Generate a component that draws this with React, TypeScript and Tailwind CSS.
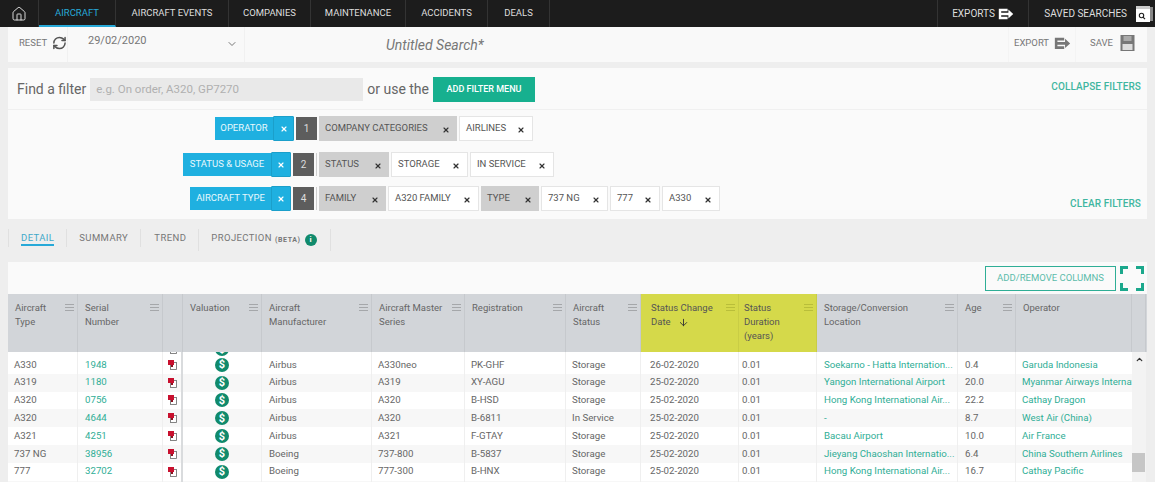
import React from 'react';
import { House, RefreshCw, ChevronDown, ChevronUp, ArrowDown, X } from 'lucide-react';

const nav = [
  { t: 'AIRCRAFT', w: 'w-[77px]', active: true },
  { t: 'AIRCRAFT EVENTS', w: 'w-[113px]' },
  { t: 'COMPANIES', w: 'w-[82px]' },
  { t: 'MAINTENANCE', w: 'w-[95px]' },
  { t: 'ACCIDENTS', w: 'w-[82px]' },
  { t: 'DEALS', w: 'w-[62px]' },
];

const filterRows = [
  {
    label: 'OPERATOR', lw: 'w-[58px]', n: '1', cls: 'mt-[6px]',
    tokens: [
      { t: 'COMPANY CATEGORIES', g: true, w: 'w-[138px]' },
      { t: 'AIRLINES', w: 'w-[74px]' },
    ],
  },
  {
    label: 'STATUS & USAGE', lw: 'w-[88px]', n: '2', cls: 'mt-[11px]',
    tokens: [
      { t: 'STATUS', g: true, w: 'w-[70px]' },
      { t: 'STORAGE', w: 'w-[77px]' },
      { t: 'IN SERVICE', w: 'w-[84px]' },
    ],
  },
  {
    label: 'AIRCRAFT TYPE', lw: 'w-[81px]', n: '4', cls: 'mt-[9px]',
    tokens: [
      { t: 'FAMILY', g: true, w: 'w-[67px]' },
      { t: 'A320 FAMILY', w: 'w-[91px]' },
      { t: 'TYPE', g: true, w: 'w-[58px]' },
      { t: '737 NG', w: 'w-[67px]' },
      { t: '777', w: 'w-[50px]' },
      { t: 'A330', w: 'w-[58px]' },
    ],
  },
];

const cols = [
  { h: ['Aircraft', 'Type'], w: 'w-[70px]' },
  { h: ['Serial', 'Number'], w: 'w-[85px]' },
  { h: [], w: 'w-[20px]', noMenu: true },
  { h: ['Valuation'], w: 'w-[79px]' },
  { h: ['Aircraft', 'Manufacturer'], w: 'w-[110px]' },
  { h: ['Aircraft Master', 'Series'], w: 'w-[93px]' },
  { h: ['Registration'], w: 'w-[101px]' },
  { h: ['Aircraft', 'Status'], w: 'w-[75px]' },
  { h: ['Status Change', 'Date'], w: 'w-[98px]', hi: true, sort: true, pad: 'pl-[10px]' },
  { h: ['Status', 'Duration', '(years)'], w: 'w-[78px]', hi: true, pad: 'pl-[5px]' },
  { h: ['Storage/Conversion', 'Location'], w: 'w-[141px]' },
  { h: ['Age'], w: 'w-[58px]' },
  { h: ['Operator'], w: 'w-[116px]', noMenu: true },
  { h: [], w: 'w-[14px]', noMenu: true },
];

const rows = [
  ['A330', '1948', 'Airbus', 'A330neo', 'PK-GHF', 'Storage', '26-02-2020', '0.01', 'Soekarno - Hatta Internation...', '0.4', 'Garuda Indonesia'],
  ['A319', '1180', 'Airbus', 'A319', 'XY-AGU', 'Storage', '25-02-2020', '0.01', 'Yangon International Airport', '20.0', 'Myanmar Airways International'],
  ['A320', '0756', 'Airbus', 'A320', 'B-HSD', 'Storage', '25-02-2020', '0.01', 'Hong Kong International Air...', '22.2', 'Cathay Dragon'],
  ['A320', '4644', 'Airbus', 'A320', 'B-6811', 'In Service', '25-02-2020', '0.01', '-', '8.7', 'West Air (China)'],
  ['A321', '4251', 'Airbus', 'A321', 'F-GTAY', 'Storage', '25-02-2020', '0.01', 'Bacau Airport', '10.0', 'Air France'],
  ['737 NG', '38956', 'Boeing', '737-800', 'B-5837', 'Storage', '25-02-2020', '0.01', 'Jieyang Chaoshan Internatio...', '6.4', 'China Southern Airlines'],
  ['777', '32702', 'Boeing', '777-300', 'B-HNX', 'Storage', '25-02-2020', '0.01', 'Hong Kong International Air...', '16.7', 'Cathay Pacific'],
];
const blank = ['', '', '', '', '', '', '', '', '', '', ''];

function ExportIcon({ color, size }: { color: string; size: number }) {
  return (
    <svg width={size} height={size * 0.75} viewBox="0 0 20 15" fill="none">
      <path d="M1 1h11v3H4v7h8v3H1z" fill={color} />
      <path d="M3 6h10V2l6 5.5-6 5.5V9H3z" fill={color} />
    </svg>
  );
}

function SaveIcon() {
  return (
    <svg width="15" height="16" viewBox="0 0 14 16">
      <rect width="14" height="16" fill="#777" />
      <rect x="3" y="1" width="8" height="5" fill="#aaa" />
      <rect x="2" y="9" width="10" height="6" fill="#ddd" />
    </svg>
  );
}

function SavedIcon() {
  return (
    <svg width="17" height="16" viewBox="0 0 17 16" fill="none">
      <rect width="14" height="16" fill="#fff" />
      <rect x="0" y="0" width="14" height="3" fill="#ccc" />
      <rect x="14" y="1" width="3" height="14" fill="#888" />
      <circle cx="5.5" cy="9.5" r="2.2" stroke="#222" strokeWidth="1.1" />
      <path d="M7 11.2l2 2" stroke="#222" strokeWidth="1.2" />
    </svg>
  );
}

function PdfIcon() {
  return (
    <svg width="9" height="10" viewBox="0 0 9 10" fill="none" className="shrink-0">
      <rect x="2.5" y="2.5" width="6" height="7" fill="#fff" stroke="#666" strokeWidth="0.8" />
      <rect x="0" y="0" width="6" height="5" fill="#c8102e" />
      <rect x="3" y="5" width="2" height="2" fill="#8a1020" />
    </svg>
  );
}

function Dollar() {
  return (
    <span className="flex h-[14px] w-[14px] shrink-0 items-center justify-center rounded-full bg-[#108a6c] text-[11px] font-bold leading-none text-white">
      $
    </span>
  );
}

function Menu({ yellow }: { yellow?: boolean }) {
  return (
    <span className={`mt-[3px] flex h-[7px] w-[9px] shrink-0 flex-col justify-between ${yellow ? 'opacity-60' : ''}`}>
      <span className={`block h-px ${yellow ? 'bg-[#a8ad30]' : 'bg-[#a5a7aa]'}`} />
      <span className={`block h-px ${yellow ? 'bg-[#a8ad30]' : 'bg-[#a5a7aa]'}`} />
      <span className={`block h-px ${yellow ? 'bg-[#a8ad30]' : 'bg-[#a5a7aa]'}`} />
    </span>
  );
}

function Cell({ w, children, cls = '' }: { w: string; children?: React.ReactNode; cls?: string }) {
  return (
    <div className={`${w} flex shrink-0 items-center overflow-hidden whitespace-nowrap border-r border-[#efefef] ${cls}`}>
      {children}
    </div>
  );
}

function BodyRow({ r, alt, icons = true, cls = 'h-[17.8px]' }: { r: string[]; alt: boolean; icons?: boolean; cls?: string }) {
  const teal = 'text-[#2fae96]';
  return (
    <div className={`flex ${cls} overflow-hidden ${alt ? 'bg-[#f7f7f7]' : 'bg-white'}`}>
      <Cell w="w-[70px]" cls="pl-[6px]">{r[0]}</Cell>
      <Cell w="w-[85px]" cls={`pl-[7px] ${teal}`}>{r[1]}</Cell>
      <Cell w="w-[20px]" cls="justify-center border-r-2 !border-[#d9dbdd]">{icons && <PdfIcon />}</Cell>
      <Cell w="w-[79px]" cls="justify-center">{icons && <Dollar />}</Cell>
      <Cell w="w-[110px]" cls="pl-[7px]">{r[2]}</Cell>
      <Cell w="w-[93px]" cls="pl-[6px]">{r[3]}</Cell>
      <Cell w="w-[101px]" cls="pl-[6px]">{r[4]}</Cell>
      <Cell w="w-[75px]" cls="pl-[6px]">{r[5]}</Cell>
      <Cell w="w-[98px]" cls="pl-[9px]">{r[6]}</Cell>
      <Cell w="w-[78px]" cls="pl-[3px]">{r[7]}</Cell>
      <Cell w="w-[141px]" cls={`pl-[7px] ${teal}`}>{r[8]}</Cell>
      <Cell w="w-[58px]" cls="pl-[7px]">{r[9]}</Cell>
      <Cell w="w-[116px]" cls={`pl-[6px] border-r-0 ${teal}`}>{r[10]}</Cell>
    </div>
  );
}

export default function App() {
  return (
    <div className="h-[482px] w-[1155px] overflow-hidden bg-[#eeeeee] font-['Roboto',sans-serif] text-[#666]">
      {/* top bar */}
      <div className="flex h-[27px] bg-[#1c1c1c] text-[9.5px] text-[#dedede]">
        <div className="flex w-[39px] items-center justify-center border-r border-[#333]">
          <House size={16} strokeWidth={1.4} className="text-[#e5e5e5]" />
        </div>
        {nav.map((n) => (
          <div
            key={n.t}
            className={`${n.w} flex items-center justify-center border-r border-[#333] ${
              n.active ? 'border-b-2 border-b-[#27a9d8] pt-[2px] text-[#27a9d8]' : ''
            }`}
          >
            {n.t}
          </div>
        ))}
        <div className="flex-1" />
        <div className="flex w-[92px] items-center justify-center gap-[3px] border-x border-[#333] text-[10px]">
          EXPORTS
          <ExportIcon color="#fff" size={16} />
        </div>
        <div className="flex w-[126px] items-center justify-end gap-[9px] pr-[2px] text-[10px]">
          SAVED SEARCHES
          <SavedIcon />
        </div>
      </div>

      {/* toolbar */}
      <div className="mx-[8px] flex h-[35px] bg-[#f9f9f9] text-[9.5px] text-[#777]">
        <div className="flex w-[60px] items-center gap-[5px] border-r border-[#f1f1f1] pb-[3px] pl-[11px]">
          RESET
          <RefreshCw size={16} strokeWidth={2.4} className="text-[#555]" />
        </div>
        <div className="flex w-[177px] items-start justify-between border-r border-[#f1f1f1] pl-[20px] pr-[6px] pt-[7px] text-[11px]">
          <span className="leading-[14px]">29/02/2020</span>
          <ChevronDown size={12} strokeWidth={2} className="mt-[4px]" />
        </div>
        <div className="flex flex-1 items-center pl-[141px] pt-[2px] text-[14px] italic text-[#777]">Untitled Search*</div>
        <div className="flex w-[68px] items-center gap-[5px] border-x border-[#f4f4f4] pb-[3px] pl-[5px]">
          EXPORT
          <ExportIcon color="#777" size={17} />
        </div>
        <div className="flex w-[71px] items-center gap-[7px] pb-[3px] pl-[14px]">
          SAVE
          <SaveIcon />
        </div>
      </div>

      {/* filter panel */}
      <div className="mx-[8px] mt-[6px] h-[151px] bg-[#fafafa]">
        <div className="flex h-[42px] items-center border-b border-[#f0f0f0] pl-[9px] pr-[6px] pt-[2px] text-[14px] text-[#666]">
          <span>Find a filter</span>
          <div className="ml-[4px] flex h-[23px] w-[273px] items-center bg-[#e9e9e9] pl-[6px] text-[11.5px] text-[#b0b0b0]">
            e.g. On order, A320, GP7270
          </div>
          <span className="ml-[4px]">or use the</span>
          <div className="ml-[4px] flex h-[25px] w-[102px] items-center justify-center bg-[#17b08f] text-[9px] font-medium text-white">
            ADD FILTER MENU
          </div>
          <span className="mb-[6px] ml-auto text-[10px] font-medium tracking-[0.1px] text-[#3fb6a0]">COLLAPSE FILTERS</span>
        </div>
        {filterRows.map((row) => (
          <div key={row.label} className={`flex items-stretch ${row.cls}`}>
            <div className="flex w-[311px] shrink-0 items-stretch justify-end gap-[2px] pr-[2px]">
              <div className={`my-[1px] flex ${row.lw} items-center justify-center whitespace-nowrap bg-[#1fb0e0] text-[9.5px] text-[#e8f8fd]`}>
                {row.label}
              </div>
              <div className={`-ml-[2px] flex ${row.n === '1' ? 'w-[21px]' : 'w-[20px]'} items-center justify-center rounded-[1px] border border-[#1b9fca] bg-[#1fb0e0]`}>
                <X size={8} strokeWidth={3.5} className="text-white" />
              </div>
              <div className="my-[1px] flex w-[21px] items-center justify-center bg-[#5d5d5d] text-[10px] text-[#ddd]">{row.n}</div>
              {row.n !== '1' && <div className="my-[1px] w-px bg-[#cfcfcf]" />}
            </div>
            <div className="flex h-[25px] gap-[2px]">
              {row.tokens.map((t) => (
                <div
                  key={t.t}
                  className={`${t.w} flex items-center justify-between whitespace-nowrap pl-[6px] pr-[7px] text-[9.5px] text-[#555] ${
                    t.g ? 'bg-[#cfcfcf]' : 'border border-[#e5e5e5] bg-white'
                  }`}
                >
                  {t.t}
                  <X size={8} strokeWidth={3.5} className="mt-[3px] text-[#333]" />
                </div>
              ))}
            </div>
            {row.n === '4' && (
              <span className="ml-auto mr-[6px] self-end text-[10px] font-medium tracking-[0.1px] text-[#3fb6a0]">CLEAR FILTERS</span>
            )}
          </div>
        ))}
      </div>

      {/* tabs */}
      <div className="mx-[8px] mt-[10px] flex h-[23px] items-start text-[9.5px] leading-[12px] tracking-[0.4px] text-[#777]">
        <div className="flex h-[18px] items-start border-l border-[#e0e0e0] pl-[12px] pr-[12px]">
          <span className="border-b-2 border-[#27a9d8] pt-[3px] text-[#3fa9c9]">DETAIL</span>
        </div>
        <div className="flex h-[18px] w-[74px] items-center border-l border-[#e0e0e0] pl-[12px]">SUMMARY</div>
        <div className="flex h-[18px] w-[58px] items-center border-l border-[#e0e0e0] pl-[13px]">TREND</div>
        <div className="flex h-[22px] w-[133px] items-start gap-[3px] whitespace-nowrap border-x border-[#e0e0e0] pl-[12px] pt-[3px]">
          PROJECTION
          <span className="mt-[2px] text-[7px] font-bold tracking-[0.6px]">(BETA)</span>
          <span className="ml-[1px] mt-[2px] flex h-[12px] w-[12px] items-center justify-center rounded-full bg-[#108a6c] text-[8px] font-bold leading-none tracking-normal text-white">i</span>
        </div>
      </div>

      {/* table panel */}
      <div className="mx-[8px] mt-[10px]">
        <div className="flex h-[32px] items-center justify-end bg-[#fafafa] pr-[3px]">
          <div className="flex h-[25px] w-[131px] items-center justify-center border border-[#2fae96] text-[9.5px] text-[#5cbcaa]">
            ADD/REMOVE COLUMNS
          </div>
          <svg width="24" height="25" viewBox="0 0 24 25" className="ml-[4px]" fill="none" stroke="#1ba88c" strokeWidth="3">
            <path d="M1.5 8V1.5H8M16 1.5h6.500V8M1.500 17v6.500H8M22.500 17v6.500H16" />
          </svg>
        </div>

        <div className="flex h-[58px] bg-[#d2d5d9] text-[9.5px] leading-[14px] text-[#666]">
          {cols.map((c, i) => (
            <div
              key={i}
              className={`${c.w} flex shrink-0 justify-between border-r pb-0 pr-[3px] pt-[7px] ${c.pad ?? 'pl-[7px]'} ${
                c.hi ? 'border-[#c9cd45] bg-[#d5d94a] text-[#555]' : 'border-[#c6c9cd]'
              }`}
            >
              <div className="whitespace-nowrap">
                {c.h.map((l, j) => (
                  <div key={j}>
                    {l}
                    {c.sort && j === 1 && <ArrowDown size={11} strokeWidth={2} className="ml-[7px] inline text-[#333]" />}
                  </div>
                ))}
              </div>
              {!c.noMenu && <Menu yellow={c.hi} />}
            </div>
          ))}
        </div>

        <div className="flex text-[9.7px] text-[#666]">
          <div className="w-[1124px] shrink-0 overflow-hidden">
            <div className="flex h-[4px] items-end overflow-hidden bg-white">
              <div className="w-full">
                <BodyRow r={blank} alt={false} cls="h-[14px]" />
              </div>
            </div>
            {rows.map((r, i) => (
              <BodyRow key={i} r={r} alt={i % 2 === 1} />
            ))}
            <BodyRow r={blank} alt icons={false} />
          </div>
          <div className="flex w-[14px] shrink-0 flex-col bg-[#f3f3f3]">
            <div className="flex h-[12px] items-end justify-center">
              <ChevronUp size={9} strokeWidth={3.5} className="text-[#333]" />
            </div>
            <div className="mt-[89px] h-[19px] w-[13px] bg-[#c6c6c6]" />
          </div>
        </div>
      </div>
    </div>
  );
}
